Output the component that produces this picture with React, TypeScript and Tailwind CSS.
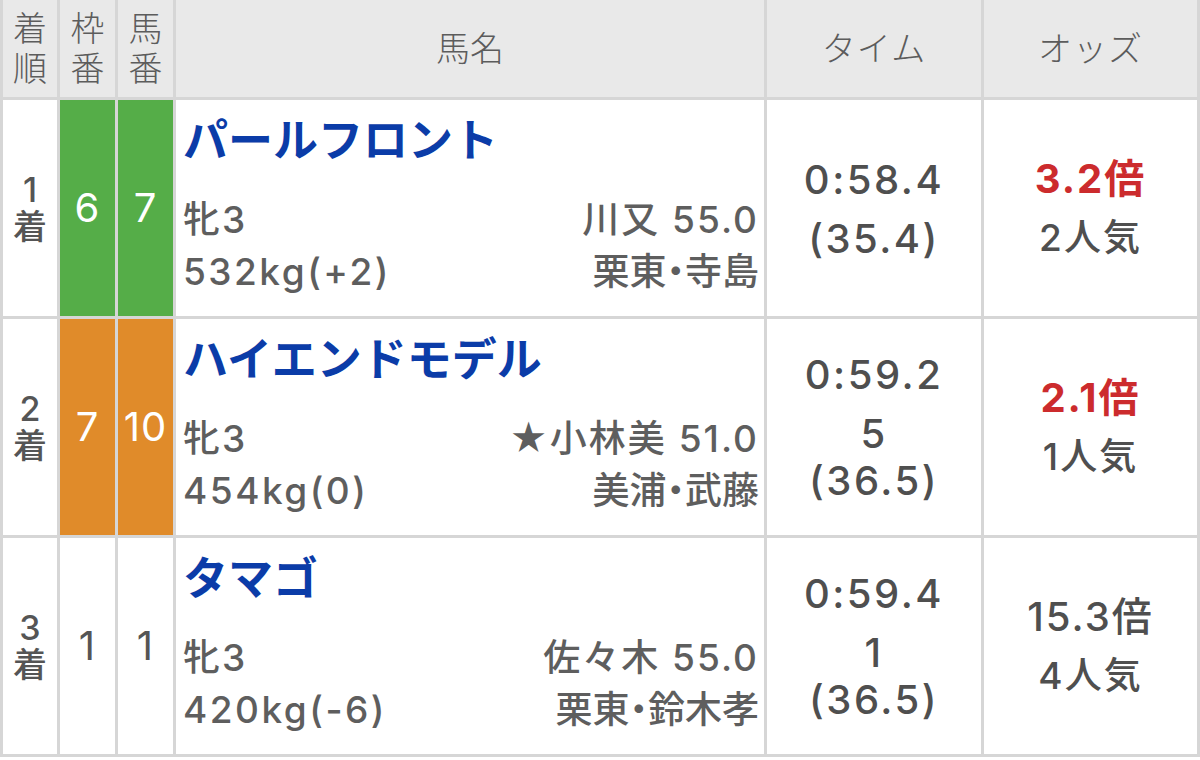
type Result = {
  rank: number;
  waku: number;
  uma: number;
  name: string;
  sex: string;
  jockey: string;
  weight: string;
  trainer: string;
  time: string;
  margin?: string;
  agari: string;
  odds: string;
  pop: string;
  hot: boolean;
};

const results: Result[] = [
  {
    rank: 1,
    waku: 6,
    uma: 7,
    name: 'パールフロント',
    sex: '牝3',
    jockey: '川又 55.0',
    weight: '532kg(+2)',
    trainer: '栗東・寺島',
    time: '0:58.4',
    agari: '(35.4)',
    odds: '3.2倍',
    pop: '2人気',
    hot: true,
  },
  {
    rank: 2,
    waku: 7,
    uma: 10,
    name: 'ハイエンドモデル',
    sex: '牝3',
    jockey: '★小林美 51.0',
    weight: '454kg(0)',
    trainer: '美浦・武藤',
    time: '0:59.2',
    margin: '5',
    agari: '(36.5)',
    odds: '2.1倍',
    pop: '1人気',
    hot: true,
  },
  {
    rank: 3,
    waku: 1,
    uma: 1,
    name: 'タマゴ',
    sex: '牝3',
    jockey: '佐々木 55.0',
    weight: '420kg(-6)',
    trainer: '栗東・鈴木孝',
    time: '0:59.4',
    margin: '1',
    agari: '(36.5)',
    odds: '15.3倍',
    pop: '4人気',
    hot: false,
  },
];

// 枠の色 (1 = 白)
function wakuClass(waku: number) {
  if (waku === 6) return 'bg-[#55ad48] text-white';
  if (waku === 7) return 'bg-[#e08b2a] text-white';
  return 'bg-white text-[#555]';
}

function HeaderCell({ children, className = '' }: { children: React.ReactNode; className?: string }) {
  return (
    <div className={`flex items-center justify-center bg-[#e9e9e9] text-[#5c5c5c] font-light ${className}`}>
      {children}
    </div>
  );
}

function ResultRow({ r }: { r: Result }) {
  return (
    <>
      <div className="flex flex-col items-center justify-center bg-white text-[34px] leading-[37px] font-medium text-[#555]">
        <span>{r.rank}</span>
        <span>着</span>
      </div>
      <div className={`flex items-center justify-center text-[40px] tracking-[1px] ${wakuClass(r.waku)}`}>{r.waku}</div>
      <div className={`flex items-center justify-center text-[40px] tracking-[1px] ${wakuClass(r.waku)}`}>{r.uma}</div>
      <div className="flex flex-col bg-white pl-[7px] pr-[5px] pt-[11px] text-[37px] leading-[52px] font-medium text-[#5e5e5e]">
        <div className="text-[45px] leading-[60px] font-bold text-[#0b3ca8]">{r.name}</div>
        <div className="mt-[23px] flex justify-between">
          <span className="tracking-[2px]">{r.sex}</span>
          <span className="tracking-[2px]">{r.jockey}</span>
        </div>
        <div className="flex justify-between">
          <span className="tracking-[2.5px]">{r.weight}</span>
          <span className="[font-feature-settings:'palt']">{r.trainer}</span>
        </div>
      </div>
      <div className="flex flex-col items-center justify-center bg-white text-[40px] font-medium tracking-[2.5px] text-[#4f4f4f]">
        <div className="leading-[50px]">{r.time}</div>
        <div className="mt-[10px] flex flex-col items-center leading-[47px]">
          {r.margin && <div>{r.margin}</div>}
          <div>{r.agari}</div>
        </div>
      </div>
      <div className="flex flex-col items-center justify-center bg-white pb-[3px] tracking-[2px]">
        <div
          className={`text-[40px] leading-[58px] ${r.hot ? 'font-bold text-[#cc2b2d]' : 'font-medium text-[#4f4f4f]'}`}
        >
          {r.odds}
        </div>
        <div className="mt-[5px] text-[37px] leading-[50px] font-medium text-[#4f4f4f]">{r.pop}</div>
      </div>
    </>
  );
}

export default function App() {
  return (
    <div className="h-[760px] w-[1200px] overflow-hidden bg-white font-['Inter','Noto_Sans_CJK_JP',sans-serif]">
      <div className="grid grid-cols-[54px_55px_55px_588px_214px_213px] grid-rows-[97px_216px_216px_216px] gap-[3px] bg-[#d6d6d6] px-[3px] pb-[3px]">
        <HeaderCell className="flex-col text-[34px] leading-[40px]">
          <span>着</span>
          <span>順</span>
        </HeaderCell>
        <HeaderCell className="flex-col text-[34px] leading-[40px]">
          <span>枠</span>
          <span>番</span>
        </HeaderCell>
        <HeaderCell className="flex-col text-[34px] leading-[40px]">
          <span>馬</span>
          <span>番</span>
        </HeaderCell>
        <HeaderCell className="text-[34px]">馬名</HeaderCell>
        <HeaderCell className="text-[34px] tracking-[1px]">タイム</HeaderCell>
        <HeaderCell className="text-[34px] tracking-[1px]">オッズ</HeaderCell>
        {results.map((r) => (
          <ResultRow key={r.rank} r={r} />
        ))}
      </div>
    </div>
  );
}
